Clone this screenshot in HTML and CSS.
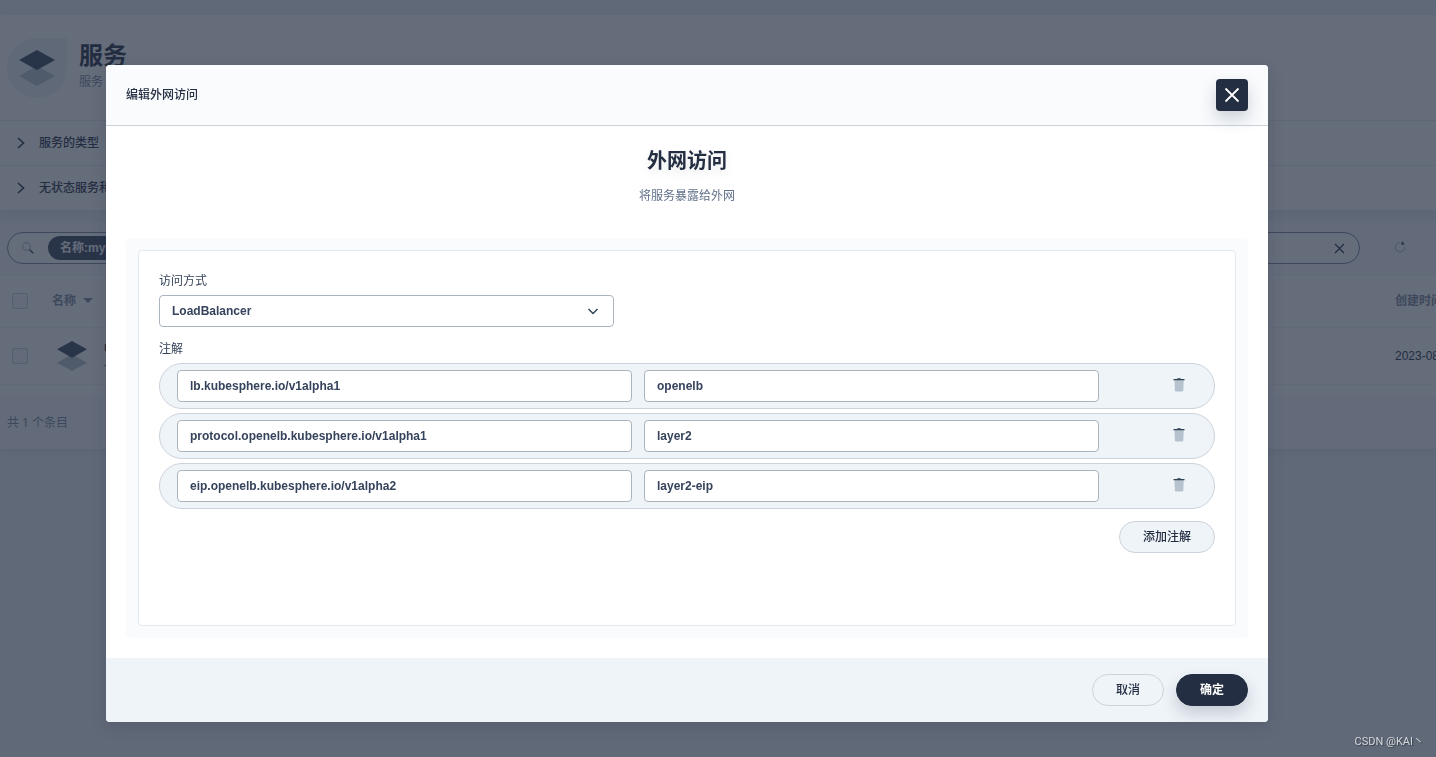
FILE: index.html
```html
<!DOCTYPE html>
<html lang="zh-CN">
<head>
<meta charset="utf-8">
<meta name="viewport" content="width=device-width, initial-scale=1">
<title>服务</title>
<link rel="stylesheet" href="styles.css">
</head>
<body>
<svg class="symbols" aria-hidden="true">
  <symbol id="layers" viewBox="0 0 36 36">
    <path fill="#b6c2cd" d="M18 16 36 26 18 36 0 26z"/>
    <path fill="#324558" d="M18 0 36 10 18 20 0 10z"/>
  </symbol>
  <symbol id="chevron" viewBox="0 0 16 16">
    <path fill="none" stroke="currentColor" stroke-width="1.6" d="M5 3 10.500 8 5 13"/>
  </symbol>
  <symbol id="cross" viewBox="0 0 16 16">
    <path fill="none" stroke="currentColor" stroke-width="1.800" d="M1.500 1.500l13 13M14.500 1.500l-13 13"/>
  </symbol>
  <symbol id="trash" viewBox="0 0 16 16">
    <path fill="#b6c2cd" d="M3.500 3h9.200L12.300 13.500q-.1.900-1 .900H4.900q-.9 0-1-.9z"/>
    <path fill="#324558" d="M2.500 2h3.500l.5-.7h3l.5.700h3.500v1.200h-11z"/>
  </symbol>
</svg>

<main class="page">
  <section class="card">
    <header class="banner">
      <div class="banner-icon"><svg class="layers-large"><use href="#layers"/></svg></div>
      <div>
        <h1 class="banner-title">服务</h1>
        <p class="banner-text">服务</p>
      </div>
    </header>
    <button class="tip" type="button"><svg class="icon"><use href="#chevron"/></svg>服务的类型</button>
    <button class="tip" type="button"><svg class="icon"><use href="#chevron"/></svg>无状态服务和有状态服务</button>
  </section>

  <section class="card">
    <div class="toolbar">
      <div class="search">
        <svg class="icon" viewBox="0 0 16 16"><circle cx="6.500" cy="6.500" r="3.800" fill="none" stroke="#b6c2cd" stroke-width="1.200"/><path d="M9.500 9.500l3.800 3.800" stroke="#324558" stroke-width="1.500"/></svg>
        <span class="chip">名称:mysql</span>
        <button class="plain" type="button" aria-label="清除"><svg class="clear-icon"><use href="#cross"/></svg></button>
      </div>
      <button class="plain refresh" type="button" aria-label="刷新"><svg class="icon" viewBox="0 0 16 16"><path d="M8.500 2.500A4.700 4.700 0 1 0 12.800 7" fill="none" stroke="#b6c2cd" stroke-width="1.200"/><path d="M9.500 5V3l1-2 2 3.500z" fill="#324558"/></svg></button>
    </div>
    <table class="table">
      <colgroup><col class="col-check"><col><col class="col-date"></colgroup>
      <thead>
        <tr>
          <th><input class="check" type="checkbox" aria-label="全选"></th>
          <th>名称 <svg class="sort" viewBox="0 0 10 5"><path d="M0 0h10L5 5z"/></svg></th>
          <th>创建时间</th>
        </tr>
      </thead>
      <tbody>
        <tr>
          <td><input class="check" type="checkbox" aria-label="选择服务"></td>
          <td><div class="service"><svg class="layers-small"><use href="#layers"/></svg><div><strong>mysql</strong><div>-</div></div></div></td>
          <td>2023-08</td>
        </tr>
      </tbody>
    </table>
    <footer class="total">共 1 个条目</footer>
  </section>
</main>

<div class="overlay">
  <form class="modal" role="dialog" aria-labelledby="modal-title">
    <header class="modal-header">
      <h2 class="modal-title" id="modal-title">编辑外网访问</h2>
      <button class="close" type="button" aria-label="关闭"><svg class="icon"><use href="#cross"/></svg></button>
    </header>
    <div class="modal-body">
      <h3 class="heading">外网访问</h3>
      <p class="subheading">将服务暴露给外网</p>
      <div class="frame">
        <div class="panel">
          <label class="label" for="mode">访问方式</label>
          <div class="select-wrap">
            <select class="field" id="mode"><option>LoadBalancer</option></select>
            <svg class="select-arrow" viewBox="0 0 12 12"><path d="M1.500 4 6 8.500 10.500 4" fill="none" stroke="#324558" stroke-width="1.500"/></svg>
          </div>
          <div class="label" id="notes">注解</div>
          <div class="notes" role="group" aria-labelledby="notes">
            <div class="note">
              <input class="field" aria-label="键" value="lb.kubesphere.io/v1alpha1">
              <input class="field" aria-label="值" value="openelb">
              <button class="plain delete" type="button" aria-label="删除"><svg class="icon"><use href="#trash"/></svg></button>
            </div>
            <div class="note">
              <input class="field" aria-label="键" value="protocol.openelb.kubesphere.io/v1alpha1">
              <input class="field" aria-label="值" value="layer2">
              <button class="plain delete" type="button" aria-label="删除"><svg class="icon"><use href="#trash"/></svg></button>
            </div>
            <div class="note">
              <input class="field" aria-label="键" value="eip.openelb.kubesphere.io/v1alpha2">
              <input class="field" aria-label="值" value="layer2-eip">
              <button class="plain delete" type="button" aria-label="删除"><svg class="icon"><use href="#trash"/></svg></button>
            </div>
          </div>
          <button class="button add" type="button">添加注解</button>
        </div>
      </div>
    </div>
    <footer class="modal-footer">
      <button class="button" type="button">取消</button>
      <button class="button primary" type="submit">确定</button>
    </footer>
  </form>
</div>
<div class="watermark">CSDN @KAI丶</div>
</body>
</html>
```

FILE: styles.css
```css
* { box-sizing: border-box; }

body {
  margin: 0;
  min-height: 100vh;
  overflow: hidden;
  background: #eff4f9;
  color: #242e42;
  font: 12px/20px "Liberation Sans", "Noto Sans CJK SC", sans-serif;
}

h1, h2, h3, p { margin: 0; }
button, input, select { font: inherit; color: inherit; }
.symbols { position: absolute; width: 0; height: 0; }
.icon { width: 16px; height: 16px; flex: none; }
.plain { display: flex; align-items: center; justify-content: center; padding: 0; border: 0; background: none; }

/* Service list behind the dialog */
.page { padding-top: 15px; }
.card { margin-bottom: 12px; background: #fff; box-shadow: 0 4px 8px rgba(36, 46, 66, .06); }
.banner { display: flex; gap: 12px; padding: 23px 7px 22px; }
.banner-icon {
  display: flex;
  align-items: center;
  justify-content: center;
  width: 60px;
  height: 60px;
  border-radius: 50% 0 50% 50%;
  background: #eff4f9;
}
.layers-large { width: 36px; height: 36px; }
.banner-title { font-size: 24px; line-height: 36px; }
.banner-text { color: #79879c; line-height: 16px; }
.tip {
  display: flex;
  align-items: center;
  gap: 10px;
  width: 100%;
  height: 45px;
  padding: 0 13px;
  border: 0;
  border-top: 1px solid #e3e9ef;
  background: none;
  font-weight: 500;
}
.toolbar { display: flex; gap: 24px; padding: 10px 20px 10px 7px; background: #f9fbfd; }
.search {
  display: flex;
  flex: 1;
  align-items: center;
  gap: 12px;
  height: 32px;
  padding: 0 14px 0 12px;
  border: 1px solid #79879c;
  border-radius: 16px;
  background: #fff;
}
.search .plain { margin-left: auto; }
.clear-icon { width: 11px; height: 11px; }
.chip { padding: 2px 12px; border-radius: 12px; background: #36435c; color: #fff; font-weight: 700; }
.refresh { width: 32px; }
.table { width: 100%; border-collapse: collapse; table-layout: fixed; white-space: nowrap; }
.col-check { width: 52px; }
.col-date { width: 41px; }
.table th, .table td { padding: 0; border: solid #eff4f9; border-width: 1px 0; text-align: left; }
.table th { height: 53px; color: #79879c; }
.table td { height: 57px; }
.check {
  display: block;
  width: 16px;
  height: 16px;
  margin: 0 12px;
  appearance: none;
  border: 1px solid #ccd3db;
  border-radius: 2px;
  background: #f9fbfd;
}
.sort { width: 10px; height: 5px; margin: 0 0 2px 4px; fill: #79879c; }
.service { display: flex; align-items: center; gap: 17px; padding-left: 5px; line-height: 18px; }
.layers-small { width: 30px; height: 30px; }
.total { margin-top: 12px; padding: 16px 7px; background: #f9fbfd; color: #79879c; font-family: "Noto Sans", "Noto Sans CJK SC", sans-serif; }

/* Dialog */
.overlay {
  position: fixed;
  inset: 0;
  padding: 65px 168px 35px 106px;
  background: rgba(36, 46, 66, .7);
}
.modal { overflow: hidden; border-radius: 4px; background: #fff; box-shadow: 0 4px 16px rgba(36, 46, 66, .2); }
.modal-header {
  display: flex;
  align-items: center;
  justify-content: space-between;
  height: 61px;
  padding: 0 20px;
  border-bottom: 1px solid #ccd3db;
  background: #f9fbfd;
}
.modal-title { font-size: 12px; font-weight: 500; }
.close {
  display: flex;
  align-items: center;
  justify-content: center;
  width: 32px;
  height: 32px;
  padding: 0;
  border: 0;
  border-radius: 4px;
  background: #242e42;
  color: #fff;
  box-shadow: 0 8px 16px rgba(36, 46, 66, .2);
}
.modal-body { padding: 20px; }
.heading { font-size: 20px; line-height: 30px; text-align: center; text-shadow: 0 4px 8px rgba(36, 46, 66, .1); }
.subheading { margin: 10px 0 32px; color: #5f708a; text-align: center; }
.frame { padding: 12px; border-radius: 4px; background: #f9fbfd; }
.panel {
  display: flex;
  flex-direction: column;
  padding: 20px 20px 72px;
  border: 1px solid #e3e9ef;
  border-radius: 4px;
  background: #fff;
}
.label { margin-bottom: 4px; color: #36435c; }
.select-wrap { position: relative; width: 100%; max-width: 455px; margin-bottom: 12px; }
.select-arrow { position: absolute; top: 10px; right: 15px; width: 12px; height: 12px; pointer-events: none; }
.field {
  width: 100%;
  min-width: 0;
  height: 32px;
  padding: 0 12px;
  appearance: none;
  border: 1px solid #abb4be;
  border-radius: 4px;
  background: #fff;
  color: #36435c;
  font-weight: 700;
}
.notes { display: grid; gap: 4px; margin-bottom: 12px; }
.note {
  display: grid;
  grid-template-columns: 1fr 1fr 86px;
  gap: 12px;
  padding: 6px 17px;
  border: 1px solid #ccd3db;
  border-radius: 23px;
  background: #eff4f9;
}
.delete { width: 36px; height: 30px; justify-self: end; }
.button {
  height: 32px;
  padding: 0 23px;
  border: 1px solid #ccd3db;
  border-radius: 16px;
  background: #eff4f9;
  font-weight: 500;
}
.add { align-self: flex-end; }
.modal-footer { display: flex; justify-content: flex-end; gap: 12px; padding: 16px 20px; background: #eff4f9; }
.primary {
  border-color: #242e42;
  background: #242e42;
  color: #fff;
  font-weight: 700;
  box-shadow: 0 8px 16px rgba(36, 46, 66, .2);
}
.watermark {
  position: fixed;
  right: 12px;
  bottom: 5px;
  color: #d5d8dc;
  font: 11px/20px Roboto, "Noto Sans CJK SC", sans-serif;
  text-shadow: 1px 1px 1px #3a404b;
}
```
